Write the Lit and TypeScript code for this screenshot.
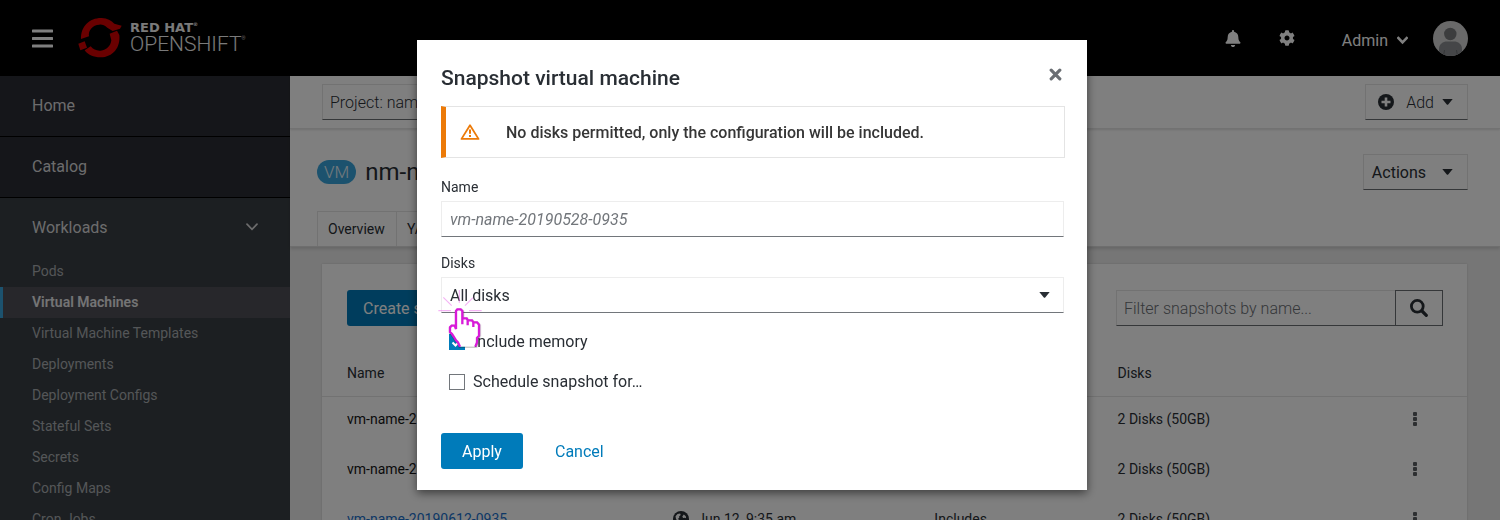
import { LitElement, html, css, svg } from 'lit';
import { customElement, state } from 'lit/decorators.js';
import { classMap } from 'lit/directives/class-map.js';

const caret = html`<svg class="caret" width="11" height="6" viewBox="0 0 11 6" aria-hidden="true"><path d="M.3 0h10.4L6.2 5.4a1 1 0 0 1-1.4 0z" fill="currentColor"/></svg>`;

const workloads = [
  'Pods', 'Virtual Machines', 'Virtual Machine Templates', 'Deployments', 'Deployment Configs',
  'Stateful Sets', 'Secrets', 'Config Maps', 'Cron Jobs',
];

const snapshots = [
  { name: 'vm-name-20190614-0935', link: false, created: 'Jun 14, 9:35 am', contents: 'Includes', disks: '2 Disks (50GB)' },
  { name: 'vm-name-20190613-0935', link: false, created: 'Jun 13, 9:35 am', contents: 'Includes', disks: '2 Disks (50GB)' },
  { name: 'vm-name-20190612-0935', link: true, created: 'Jun 12, 9:35 am', contents: 'Includes', disks: '2 Disks (50GB)' },
];

@customElement('app-header')
class AppHeader extends LitElement {
  static styles = css`
    :host { display: block; }
    header { display: flex; align-items: center; height: 76px; padding: 0 32px; box-sizing: border-box; background: #000; color: #fff; }
    button { border: 0; padding: 0; background: none; color: inherit; font: inherit; display: flex; align-items: center; }
    .brand { display: flex; align-items: center; gap: 8px; margin-left: 25px; color: #f4f4f4; }
    .words { display: grid; padding-bottom: 3px; }
    .red { font: 700 13px/14px "DejaVu Sans", sans-serif; }
    .shift { font: 300 21px/18px Roboto, sans-serif; }
    .reg { font-size: 5px; vertical-align: top; line-height: 6px; }
    .tools { display: flex; align-items: center; margin-left: auto; }
    .gear { margin-left: 38px; }
    .user { margin: 5px 25px 0 47px; gap: 9px; font-size: 16px; }
  `;
  render() {
    return html`<header>
      <button aria-label="Toggle navigation"><svg width="21" height="19" viewBox="0 0 21 19"><path d="M1 2h19M1 9.5h19M1 17h19" stroke="currentColor" stroke-width="3" stroke-linecap="round"/></svg></button>
      <div class="brand">
        <svg width="44" height="42" viewBox="24 18 132 126" aria-hidden="true">
          <g fill="#d40000">
            <path d="M33 84C32 45 60 20 95 21c17 1 29 7 38 17l22 6-5 9-22 7-16-10c-8-7-16-10-24-9-20 1-34 17-31 35z"/>
            <path d="M44 118l18-12c8 10 18 14 30 13 18-2 30-14 32-31l-5-20 22-9 7 13c4 38-20 67-56 67-22 0-38-7-48-21z"/>
            <path d="M25 98l19-7 7 19-20 8z"/>
          </g>
        </svg>
        <div class="words"><span class="red">RED HAT<span class="reg">®</span></span><span class="shift">OPENSHIFT<span class="reg">®</span></span></div>
      </div>
      <div class="tools">
        <button aria-label="Notifications"><svg width="16" height="17" viewBox="0 0 448 512"><path fill="currentColor" d="M224 512c35.300 0 63.900-28.600 63.900-64H160.100c0 35.400 28.600 64 63.900 64zm215.400-149.700c-19.300-20.800-55.500-52-55.500-154.300 0-77.700-54.500-139.900-127.900-155.200V32a32 32 0 1 0-64 0v20.800C118.600 68.100 64.100 130.300 64.100 208c0 102.300-36.200 133.500-55.500 154.300C2.600 368.700 0 376.500 0 384c.1 16.400 13 32 32.100 32h383.800c19.100 0 32-15.600 32.100-32 0-7.500-2.700-15.300-8.600-21.700z"/></svg></button>
        <button class="gear" aria-label="Settings"><svg width="16" height="16" viewBox="0 0 512 512"><path fill="currentColor" d="M487.400 315.700l-42.600-24.600c4.300-23.200 4.300-47 0-70.200l42.600-24.600c4.900-2.800 7.100-8.600 5.500-14-11.100-35.600-30-67.800-54.700-94.600-3.800-4.100-10-5.100-14.800-2.300L380.800 110c-17.900-15.400-38.500-27.300-60.800-35.100V25.800c0-5.600-3.900-10.500-9.400-11.700-36.700-8.200-74.300-7.800-109.200 0-5.500 1.200-9.400 6.100-9.400 11.700V75c-22.200 7.900-42.800 19.800-60.800 35.100L88.700 85.500c-4.900-2.800-11-1.900-14.800 2.300-24.700 26.700-43.600 58.900-54.700 94.600-1.700 5.400.6 11.200 5.500 14L67.300 221c-4.300 23.200-4.300 47 0 70.200l-42.600 24.600c-4.900 2.800-7.100 8.600-5.500 14 11.100 35.600 30 67.800 54.700 94.600 3.800 4.100 10 5.100 14.800 2.300l42.600-24.600c17.900 15.400 38.500 27.300 60.800 35.100v49.200c0 5.600 3.900 10.500 9.400 11.700 36.700 8.200 74.300 7.800 109.200 0 5.500-1.200 9.400-6.100 9.400-11.700v-49.200c22.200-7.900 42.800-19.800 60.800-35.100l42.600 24.600c4.900 2.800 11 1.900 14.800-2.300 24.700-26.700 43.600-58.900 54.700-94.600 1.500-5.500-.7-11.300-5.600-14.100zM256 336c-44.100 0-80-35.900-80-80s35.900-80 80-80 80 35.900 80 80-35.900 80-80 80z"/></svg></button>
        <button class="user">Admin <svg width="11" height="9" viewBox="0 0 11 9"><path d="M1.300 2 5.500 6.400 9.700 2" fill="none" stroke="currentColor" stroke-width="2.600" stroke-linecap="square"/></svg></button>
        <svg width="35" height="35" viewBox="0 0 35 35" role="img" aria-label="Admin avatar"><defs><clipPath id="disc"><circle cx="17.500" cy="17.500" r="17.500"/></clipPath></defs><g clip-path="url(#disc)"><path d="M0 0h35v35H0z" fill="#d2d2d2"/><path d="M6 35V28c0-5 4-7.500 8-7.500h7c4 0 8 2.500 8 7.500v7z" fill="#8a8d90"/><circle cx="17.300" cy="13" r="6.200" fill="#787a7d"/><path d="M10.500 35l1-6M24.500 35l-1-6" stroke="#6a6d70"/></g></svg>
      </div>
    </header>`;
  }
}

@customElement('app-sidebar')
class AppSidebar extends LitElement {
  static styles = css`
    :host { display: block; width: 290px; flex: none; background: #393f44; box-shadow: 2px 0 6px #0003; }
    ul { list-style: none; margin: 0; padding: 0; }
    a { display: flex; align-items: center; color: #d8d8da; text-decoration: none; box-sizing: border-box; padding-bottom: 2px; }
    .top { height: 60px; padding: 0 32px 2px; font-size: 16px; background: #2b2d34; }
    .sep { border-bottom: 1px solid #000; }
    .open { height: 58px; padding-bottom: 0; background: none; justify-content: space-between; }
    .sub { height: 31px; padding: 0 29px 2px; border-left: 3px solid transparent; font-size: 14px; color: #a8acb0; }
    .active { background: #4e4f56; border-color: #39a5dc; color: #e8e8ea; font-weight: 600; }
  `;
  render() {
    return html`<nav aria-label="Main"><ul>
      <li class="sep"><a class="top" href="#home">Home</a></li>
      <li class="sep"><a class="top" href="#catalog">Catalog</a></li>
      <li><a class="top open" href="#workloads">Workloads<svg width="12" height="8" viewBox="0 0 12 8"><path d="M1 1.200 6 6.300 11 1.200" fill="none" stroke="currentColor" stroke-width="1.700" stroke-linecap="round"/></svg></a>
        <ul>${workloads.map((w) => html`<li><a href="#" class=${classMap({ sub: true, active: w === 'Virtual Machines' })}>${w}</a></li>`)}</ul>
      </li>
    </ul></nav>`;
  }
}

@customElement('vm-page')
class VmPage extends LitElement {
  static styles = css`
    :host { display: block; flex: 1; min-width: 0; background: #ececec; color: #292e34; }
    button, input { font: inherit; color: inherit; margin: 0; box-sizing: border-box; border-radius: 0; }
    .bar { display: flex; justify-content: space-between; padding: 8px 32px; background: #fff; border-bottom: 1px solid #e4e4e4; box-shadow: 0 1px 2px #0002; position: relative; }
    .drop { display: flex; align-items: center; height: 36px; padding: 0 14px 0 8px; font-size: 16px; background: #fff; border: 1px solid #e4e4e4; border-bottom: 1px solid #6a6e73; }
    .light { font-weight: 300; }
    .project { gap: 40px; padding-left: 7px; }
    .add { gap: 8px; padding-left: 12px; }
    .add svg:first-child { margin-right: 4px; }
    .actions { gap: 16px; }
    .heading { background: #fff; border-bottom: 1px solid #ddd; box-shadow: 0 2px 3px #0002; padding: 25px 32px 0 27px; }
    .titles { display: flex; align-items: center; gap: 9px; }
    h1 { margin: 0; font-size: 24px; font-weight: 400; flex: 1; }
    .badge { background: #39a5dc; color: #e8f4fa; border-radius: 12px; height: 24px; padding: 0 7px; font-size: 17px; line-height: 25px; font-weight: 300; }
    .tabs { display: flex; margin-top: 21px; }
    .tab { min-width: 80px; height: 35px; padding: 0 10px; background: #fff; border: 1px solid #e4e4e4; border-width: 1px 1px 0; font-size: 14px; text-align: left; }
    .tab + .tab { border-left: 0; }
    .card { margin: 17px 33px 0 32px; padding-top: 26px; background: #fff; box-shadow: 0 0 2px #0002; }
    .toolbar { display: flex; justify-content: space-between; padding: 0 24px 0 25px; }
    .primary { height: 36px; padding: 0 16px; border: 0; border-radius: 3px; background: #007bba; color: #fff; font-size: 16px; }
    .search { display: flex; }
    .search input { width: 279px; height: 36px; padding: 0 7px; border: 1px solid #e4e4e4; border-width: 1px 0 1px 1px; border-bottom-color: #6a6e73; font-size: 16px; font-weight: 300; }
    .search input::placeholder { color: #6a6e73; opacity: 1; }
    .search button { width: 48px; display: grid; place-items: center; padding: 0; background: #fff; border: 1px solid #6a6e73; }
    table { width: 100%; margin-top: 24px; border-collapse: collapse; table-layout: fixed; font-size: 14px; }
    th, td { box-sizing: border-box; padding: 0 0 0 25px; text-align: left; font-weight: 400; white-space: nowrap; }
    th { height: 46px; border-bottom: 1px solid #e4e4e4; }
    td { height: 50px; padding-bottom: 4px; }
    .c1 { width: 28.5%; } .c2 { width: 22.8%; } .c3 { width: 16%; } .c5 { width: 100px; }
    .name { color: #151515; }
    .link { color: #1a70cc; text-decoration: none; }
    .when { display: flex; align-items: center; gap: 8px; }
    td.menu { padding: 0 47px 6px 0; text-align: right; }
    .kebab { border: 0; background: none; padding: 0 3px; height: 14px; color: #5a5e63; vertical-align: middle; }
    .kebab svg { display: block; }
  `;
  render() {
    return html`
      <div class="bar">
        <button class="drop light project">Project: namespace ${caret}</button>
        <button class="drop light add"><svg width="16" height="16" viewBox="0 0 16 16"><circle cx="8" cy="8" r="8" fill="currentColor"/><path d="M8 3.500v9M3.500 8h9" stroke="#fff" stroke-width="2.600"/></svg> Add ${caret}</button>
      </div>
      <div class="heading">
        <div class="titles"><span class="badge">VM</span><h1>nm-name</h1><button class="drop actions">Actions ${caret}</button></div>
        <div class="tabs"><button class="tab">Overview</button><button class="tab">YAML</button></div>
      </div>
      <section class="card">
        <div class="toolbar">
          <button class="primary">Create snapshot</button>
          <div class="search"><input aria-label="Filter snapshots" placeholder="Filter snapshots by name..."><button aria-label="Search"><svg width="18" height="18" viewBox="0 0 18 18"><circle cx="7.300" cy="7.300" r="5.900" fill="none" stroke="currentColor" stroke-width="2.800"/><path d="m12 12 4.300 4.300" stroke="currentColor" stroke-width="3.200" stroke-linecap="round"/></svg></button></div>
        </div>
        <table>
          <thead><tr><th class="c1">Name</th><th class="c2">Created</th><th class="c3">Contents</th><th>Disks</th><th class="c5"></th></tr></thead>
          <tbody>${snapshots.map((s) => html`<tr>
            <td class="name">${s.link ? html`<a class="link" href="#">${s.name}</a>` : s.name}</td>
            <td><span class="when"><svg width="16" height="16" viewBox="0 0 16 16"><circle cx="8" cy="8" r="8" fill="#292e34"/><path d="M2.500 5.200 4.500 3l2.600-.5.600 1.500-1.600 1.500.2 1.300L4.800 8l2 1.200.5 1.400-1.200 2.800-.8-2.600L3 8zM10.800 3.400l2 1.800.3 2-1.300-.5-1.700.4-.8-1.600z" fill="#fff"/></svg>${s.created}</span></td>
            <td>${s.contents}</td><td>${s.disks}</td>
            <td class="menu"><button class="kebab" aria-label="Snapshot actions"><svg width="4" height="14" viewBox="0 0 4 14"><rect width="4" height="4" rx="1" fill="currentColor"/><rect y="5" width="4" height="4" rx="1" fill="currentColor"/><rect y="10" width="4" height="4" rx="1" fill="currentColor"/></svg></button></td>
          </tr>`)}</tbody>
        </table>
      </section>`;
  }
}

@customElement('snapshot-dialog')
class SnapshotDialog extends LitElement {
  @state() private memory = true;
  static styles = css`
    :host { display: block; position: relative; width: 670px; max-width: 100%; height: fit-content; box-sizing: border-box; padding: 24px 22px 21px 24px; background: #fff; color: #292e34; box-shadow: 0 3px 9px #0008; }
    button, input, select { font: inherit; color: inherit; margin: 0; box-sizing: border-box; border-radius: 0; }
    .head { display: flex; align-items: center; justify-content: space-between; height: 28px; margin-bottom: 14px; }
    h2 { margin: 0; font-size: 21px; line-height: 28px; font-weight: 500; }
    .close { border: 0; background: none; padding: 0 3px 8px 0; color: #6a6e73; display: flex; }
    .alert { display: flex; align-items: center; gap: 26px; height: 52px; box-sizing: border-box; padding-left: 14px; border: 1px solid #e4e4e4; border-left: 5px solid #ec7a08; font-size: 16px; font-weight: 500; color: #363636; }
    .label { display: block; margin-top: 19px; font-size: 14px; line-height: 20px; }
    .field { display: grid; align-items: center; margin: 4px 1px 0 0; }
    .field + .label { margin-top: 16px; }
    .field > * { grid-area: 1 / 1; }
    .control { width: 100%; height: 36px; padding: 0 8px; border: 1px solid #ededed; border-bottom-color: #72767b; background: #fff; font-size: 16px; appearance: none; }
    .control::placeholder { color: #72767b; opacity: 1; font-style: italic; }
    .field .caret { justify-self: end; margin-right: 14px; pointer-events: none; }
    .checks { display: grid; gap: 20px; margin: 19px 0 0 8px; }
    .check { display: flex; align-items: center; gap: 8px; font-size: 16px; line-height: 20px; }
    .box { display: grid; }
    .box > * { grid-area: 1 / 1; }
    .box input { appearance: none; width: 16px; height: 16px; border: 1px solid #72767b; background: #fff; }
    .box input:checked { background: #007bba; border-color: #007bba; }
    .tick { pointer-events: none; }
    .foot { display: flex; gap: 16px; margin-top: 41px; }
    .foot button { height: 36px; border: 0; font-size: 16px; }
    .apply { min-width: 82px; padding: 0 16px; border-radius: 3px; background: #007bba; color: #fff; }
    .cancel { padding: 0 16px; background: none; color: #007bba; }
    .pointer { position: absolute; left: 18px; top: 245px; pointer-events: none; }
    .hand { filter: drop-shadow(1px 2px 2px #0006); }
  `;
  render() {
    return html`
      <div class="head"><h2 id="title">Snapshot virtual machine</h2><button class="close" aria-label="Close"><svg width="13" height="13" viewBox="0 0 13 13"><path d="m2.200 2.200 8.600 8.600m0-8.600-8.600 8.600" stroke="currentColor" stroke-width="3.200" stroke-linecap="round"/></svg></button></div>
      <div class="alert" role="alert"><svg width="20" height="16" viewBox="0 0 20 16"><path d="M10 1.200 18.500 14.900h-17z" fill="none" stroke="#ec7a08" stroke-width="1.800" stroke-linejoin="round"/><path d="M10 5.500v4.200m0 1.200v2" stroke="#ec7a08" stroke-width="2"/></svg>No disks permitted, only the configuration will be included.</div>
      <label class="label" for="name">Name</label>
      <div class="field"><input class="control" id="name" placeholder="vm-name-20190528-0935"></div>
      <label class="label" for="disks">Disks</label>
      <div class="field"><select class="control" id="disks"><option>All disks</option></select>${caret}</div>
      <div class="checks">
        <label class="check"><span class="box"><input type="checkbox" .checked=${this.memory} @change=${() => (this.memory = !this.memory)}>${this.memory ? html`<svg class="tick" width="16" height="16" viewBox="0 0 16 16"><path d="m3.500 8.500 3 3 6-6.500" fill="none" stroke="#fff" stroke-width="2"/></svg>` : ''}</span>Include memory</label>
        <label class="check"><span class="box"><input type="checkbox"></span>Schedule snapshot for…</label>
      </div>
      <div class="foot"><button class="apply">Apply</button><button class="cancel">Cancel</button></div>
      <svg class="pointer" width="60" height="75" viewBox="0 0 180 225" aria-hidden="true">
        <path d="M10 77h38m54 0h38M25 37l25 25m40 0 24-24M73 15v38" stroke="#ee82ee" stroke-opacity=".6" stroke-width="3.500"/>
        <g class="hand">
          <path d="M63 78l4-5h10l5 5v22h13l3 6h13l4 6h11l6 7v33l-6 7v13l-6 13H75l-6-13-6-6-6-10-6-9-6-6v-14l5-5h9l4 4z" fill="#fff"/>
          ${svg`<path d="M75 185l-6-13-6-6-6-10-6-9-6-6v-14l5-5h9l4 10V78l4-5h10l5 5v40m0-18h13l3 6v15m0-15h13l4 6v14m0-14h11l6 7v33l-6 7v13l-5 13" fill="none" stroke="#d91ad9" stroke-width="7"/>`}
        </g>
      </svg>`;
  }
}

@customElement('app-root')
class AppRoot extends LitElement {
  static styles = css`
    :host { display: flex; flex-direction: column; height: 100vh; overflow: hidden; font-family: Roboto, "Liberation Sans", sans-serif; }
    .body { display: flex; flex: 1; min-height: 0; overflow: hidden; }
    .backdrop { position: fixed; inset: 0; display: flex; justify-content: center; padding: 40px 0 0 4px; background: rgb(0 0 0 / 50%); overflow: hidden; }
  `;
  render() {
    return html`<app-header></app-header>
      <div class="body"><app-sidebar></app-sidebar><vm-page></vm-page></div>
      <div class="backdrop"><snapshot-dialog role="dialog" aria-label="Snapshot virtual machine"></snapshot-dialog></div>`;
  }
}
